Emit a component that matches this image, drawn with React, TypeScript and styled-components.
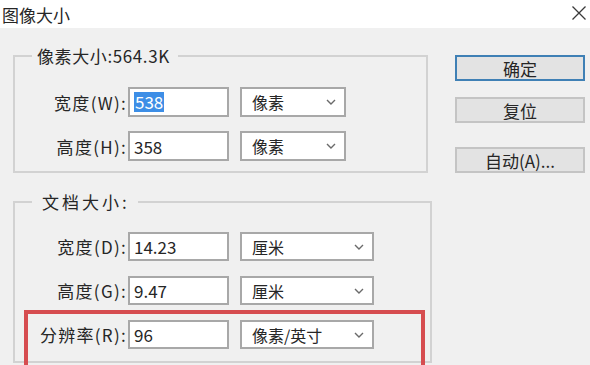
import styled, { createGlobalStyle } from 'styled-components';

const GlobalStyle = createGlobalStyle`
    html, body {
        margin: 0;
        padding: 0;
        background: #f0f0f0;
    }
    body {
        font-family: "Noto Sans CJK SC", "Microsoft YaHei", sans-serif;
        color: #262626;
    }
`;

const Dialog = styled.div`
    position: relative;
    width: 590px;
    height: 365px;
    overflow: hidden;
    background: #f0f0f0;
`;

const TitleBar = styled.div`
    height: 28px;
    display: flex;
    align-items: center;
    justify-content: space-between;
    padding: 0 3px 0 2px;
    background: #ffffff;
    font-size: 17px;
    line-height: 1;
    box-sizing: border-box;
`;

const CloseButton = styled.div`
    width: 16px;
    height: 16px;
    margin-top: -2px;
    display: flex;
    color: #3a3a3a;
`;

const Body = styled.div`
    display: flex;
    padding: 17px 0 0 13px;
    gap: 23px;
`;

const Groups = styled.div`
    display: flex;
    flex-direction: column;
    gap: 18px;
`;

const Group = styled.fieldset<{ $width: number; $gap: number }>`
    width: ${(p) => p.$width}px;
    box-sizing: border-box;
    margin: 0;
    padding: ${(p) => (p.$gap === 14 ? '20px 0 10px' : '19px 0 12px')};
    border: 2px solid #d2d2d2;
    display: flex;
    flex-direction: column;
    gap: ${(p) => p.$gap}px;
`;

const Legend = styled.legend<{ $spaced?: boolean }>`
    margin-left: 17px;
    padding: 0 8px 0 ${(p) => (p.$spaced ? 10 : 5)}px;
    font-size: 17px;
    line-height: 22px;
    letter-spacing: ${(p) => (p.$spaced ? 3 : 0.6)}px;
`;

const Row = styled.div<{ $height: number }>`
    display: flex;
    align-items: center;
    height: ${(p) => p.$height}px;
`;

const Label = styled.label`
    width: 112px;
    margin-right: 1px;
    text-align: right;
    font-size: 17px;
    letter-spacing: 1.3px;
    white-space: nowrap;
`;

const Field = styled.div`
    width: 101px;
    height: 100%;
    box-sizing: border-box;
    border: 2px solid #a8a8a8;
    background: #ffffff;
    display: flex;
    align-items: center;
    padding-left: 4px;
    font-size: 17px;
`;

const Selected = styled.span`
    background: #3d8ee6;
    color: #ffffff;
    padding: 0 1px;
    line-height: 20px;
`;

const Select = styled.div<{ $width: number }>`
    width: ${(p) => p.$width}px;
    height: 100%;
    margin-left: 11px;
    box-sizing: border-box;
    border: 2px solid #a8a8a8;
    background: #ffffff;
    display: flex;
    align-items: center;
    justify-content: space-between;
    padding: 0 8px 0 10px;
    font-size: 16px;
`;

const Chevron = styled.svg`
    width: 10px;
    height: 6px;
    color: #6a6a6a;
`;

const Buttons = styled.div`
    display: flex;
    flex-direction: column;
    width: 130px;
    margin-top: 10px;
`;

const Button = styled.div<{ $primary?: boolean; $top: number }>`
    height: 26px;
    margin-top: ${(p) => p.$top}px;
    box-sizing: border-box;
    border: ${(p) => (p.$primary ? '2px solid #3f80b5' : '2px solid #c4c4c4')};
    background: #e3e3e3;
    display: flex;
    align-items: center;
    justify-content: center;
    font-size: 17px;
`;

const Highlight = styled.div`
    position: absolute;
    left: 24px;
    top: 310px;
    width: 401px;
    height: 70px;
    border: 4px solid #d64d50;
    box-sizing: border-box;
    pointer-events: none;
`;

const ChevronIcon = () => (
    <Chevron viewBox="0 0 10 6">
        <path d="M1 1 L5 5 L9 1" fill="none" stroke="currentColor" strokeWidth="1.4" />
    </Chevron>
);

const pixelRows = [
    { label: '宽度(W):', value: '538', unit: '像素', selected: true },
    { label: '高度(H):', value: '358', unit: '像素' },
];

const docRows = [
    { label: '宽度(D):', value: '14.23', unit: '厘米' },
    { label: '高度(G):', value: '9.47', unit: '厘米' },
    { label: '分辨率(R):', value: '96', unit: '像素/英寸' },
];

export default function App() {
    return (
        <Dialog>
            <GlobalStyle />
            <TitleBar>
                <span>图像大小</span>
                <CloseButton>
                    <svg viewBox="0 0 16 16" width="16" height="16">
                        <path d="M1.5 1.5 L14.5 14.5 M14.5 1.5 L1.5 14.5" stroke="currentColor" strokeWidth="1.3" />
                    </svg>
                </CloseButton>
            </TitleBar>
            <Body>
                <Groups>
                    <Group $width={415} $gap={14}>
                        <Legend>像素大小:564.3K</Legend>
                        {pixelRows.map((row) => (
                            <Row key={row.label} $height={30}>
                                <Label>{row.label}</Label>
                                <Field>{row.selected ? <Selected>{row.value}</Selected> : row.value}</Field>
                                <Select $width={106}>
                                    {row.unit}
                                    <ChevronIcon />
                                </Select>
                            </Row>
                        ))}
                    </Group>
                    <Group $width={419} $gap={15}>
                        <Legend $spaced>文档大小:</Legend>
                        {docRows.map((row) => (
                            <Row key={row.label} $height={29}>
                                <Label>{row.label}</Label>
                                <Field>{row.value}</Field>
                                <Select $width={134}>
                                    {row.unit}
                                    <ChevronIcon />
                                </Select>
                            </Row>
                        ))}
                    </Group>
                </Groups>
                <Buttons>
                    <Button $primary $top={0}>确定</Button>
                    <Button $top={16}>复位</Button>
                    <Button $top={24}>自动(A)...</Button>
                </Buttons>
            </Body>
            <Highlight />
        </Dialog>
    );
}
